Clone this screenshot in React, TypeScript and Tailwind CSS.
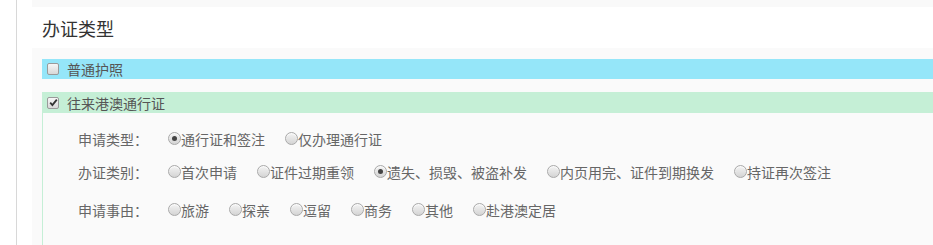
import React from "react";

const FONT = '"Noto Sans CJK SC", "Noto Sans", sans-serif';

type RadioGroupProps = {
  label: string;
  options: string[];
  selected?: number;
};

const Radio = ({ checked, text }: { checked: boolean; text: string }) => (
  <span className="mr-[20px] flex items-center">
    <span className="flex h-[13px] w-[13px] items-center justify-center rounded-full border border-[#a9a9a9] bg-gradient-to-b from-[#f4f4f4] to-[#d4d4d4] shadow-[inset_0_1px_1px_rgba(255,255,255,0.8)]">
      {checked && <span className="h-[5px] w-[5px] rounded-full bg-[#444]" />}
    </span>
    <span className="text-[14px] leading-none text-[#666]">{text}</span>
  </span>
);

const RadioRow = ({ label, options, selected }: RadioGroupProps) => (
  <div className="flex h-[33px] items-center">
    <span className="w-[90px] text-[14px] leading-none text-[#666]">{label}</span>
    {options.map((o, i) => (
      <Radio key={o} checked={i === selected} text={o} />
    ))}
  </div>
);

const CheckBox = ({ checked }: { checked?: boolean }) => (
  <span className="flex h-[12px] w-[12px] items-center justify-center rounded-[2px] border border-[#9a9a9a] bg-gradient-to-b from-[#f6f6f6] to-[#d8d8d8]">
    {checked && (
      <svg width="9" height="9" viewBox="0 0 9 9">
        <path d="M1.2 4.6 L3.4 7 L7.8 1.6" stroke="#333" strokeWidth="1.8" fill="none" />
      </svg>
    )}
  </span>
);

export default function App() {
  return (
    <div className="flex h-[245px] w-[933px] overflow-hidden bg-white" style={{ fontFamily: FONT }}>
      <div className="w-[16px]" />
      <div className="w-px bg-[#d8d8d8]" />
      <div className="w-[15px]" />
      <div className="flex flex-1 flex-col">
        <div className="h-[7px] bg-[#f9f9f9]" />
        <div className="flex h-[41px] items-center px-[10px]">
          <span className="text-[18px] leading-none text-[#333]">办证类型</span>
        </div>
        <div className="flex flex-1 flex-col bg-[#fafafa] pl-[10px] pt-[11px]">
          <div className="flex h-[20px] items-center gap-[8px] bg-[#95e6f9] pl-[5px]">
            <CheckBox />
            <span className="text-[14px] leading-none text-[#555]">普通护照</span>
          </div>
          <div className="mt-[13px] flex h-[21px] items-center gap-[8px] bg-[#c5efd6] pl-[5px]">
            <CheckBox checked />
            <span className="text-[14px] leading-none text-[#555]">往来港澳通行证</span>
          </div>
          <div className="flex-1 border-l border-[#c5efd6] pl-[35px] pt-[9px]">
            <RadioRow label="申请类型：" options={["通行证和签注", "仅办理通行证"]} selected={0} />
            <RadioRow
              label="办证类别："
              options={["首次申请", "证件过期重领", "遗失、损毁、被盗补发", "内页用完、证件到期换发", "持证再次签注"]}
              selected={2}
            />
            <div className="mt-[5px]">
              <RadioRow label="申请事由：" options={["旅游", "探亲", "逗留", "商务", "其他", "赴港澳定居"]} />
            </div>
          </div>
        </div>
      </div>
    </div>
  );
}
